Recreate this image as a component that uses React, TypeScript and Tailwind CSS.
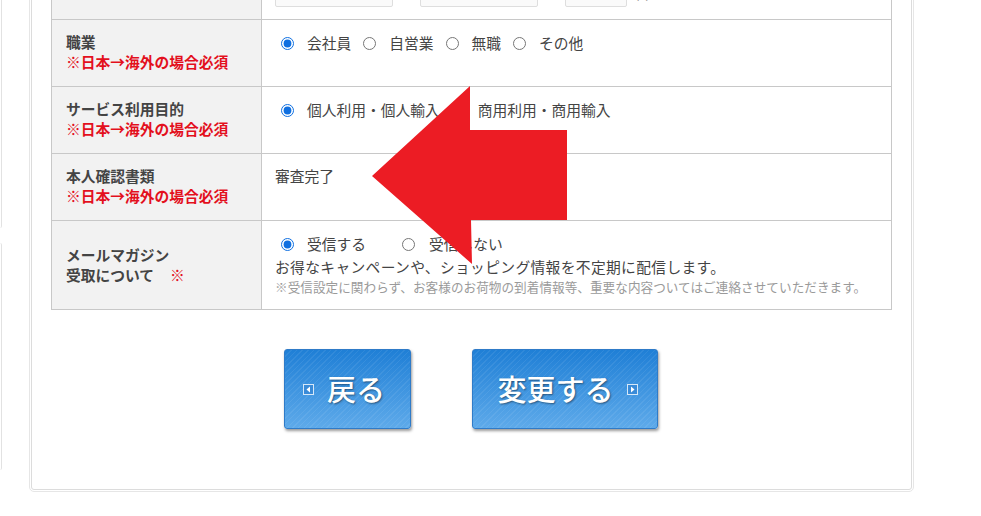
const Radio = ({ checked = false }: { checked?: boolean }) => (
  <input
    type="radio"
    checked={checked}
    readOnly
    className="m-0 w-[13px] h-[13px] shrink-0 accent-[#0f6fe0]"
  />
)

const Label = ({ title, note = true }: { title: string; note?: boolean }) => (
  <div className="w-[210px] shrink-0 border-r border-[#c8c8c8] bg-[#f2f2f2] pl-[14px] pt-[12px] font-bold leading-[20px] text-[#444]">
    <div>{title}</div>
    {note && (
      <div className="text-[#e3101d]">
        <span className="font-normal">※</span>日本→海外の場合必須
      </div>
    )}
  </div>
)

const ArrowBox = ({ dir }: { dir: 'left' | 'right' }) => (
  <span className="flex h-[11px] w-[11px] items-center justify-center border border-[#d6e8f8] bg-[#3a8bd8]">
    <svg width="7" height="7" viewBox="0 0 7 7">
      {dir === 'left' ? <polygon points="5,0.5 5,6.5 1.5,3.5" fill="#fff" /> : <polygon points="2,0.5 2,6.5 5.5,3.5" fill="#fff" />}
    </svg>
  </span>
)

const btn =
  'flex h-[80px] items-center justify-center gap-[13px] rounded-[3px] border border-[#2f7bc8] bg-[image:repeating-linear-gradient(135deg,rgba(255,255,255,0.07)_0px,rgba(255,255,255,0.07)_1px,transparent_1px,transparent_4px),linear-gradient(to_bottom,#1f7fd6,#5eaaea)] text-[29px] font-medium text-white shadow-[1px_2px_3px_rgba(0,0,0,0.4)] [text-shadow:1px_1px_2px_rgba(0,0,0,0.45)]'

export default function App() {
  return (
    <div className="relative flex h-[516px] w-[981px] overflow-hidden bg-white font-['Noto_Sans_CJK_JP',sans-serif] text-[14.75px] text-[#444]">
      {/* sidebar edge on the left */}
      <div className="flex w-[2px] shrink-0 flex-col gap-[15px]">
        <div className="h-[228px] rounded-br-[3px] border-r border-[#e2e2e2]" />
        <div className="h-[227px] rounded-tr-[3px] rounded-br-[3px] border-r border-[#e2e2e2]" />
      </div>

      <div className="ml-[29px] -mt-[41px] h-[531px] w-[881px] shrink-0 rounded-[3px] border border-[#dcdcdc] px-[19px] pb-[59px] outline outline-1 outline-offset-1 outline-[#e6e6e6]">
        <div className="border-x border-t border-[#c8c8c8]">
          {/* partially visible row */}
          <div className="flex h-[59px] border-b border-[#c8c8c8]">
            <div className="w-[210px] shrink-0 border-r border-[#c8c8c8] bg-[#f2f2f2]" />
            <div className="flex items-end gap-[27px] pb-[12px] pl-[13px]">
              <div className="h-[30px] w-[118px] rounded-[2px] border border-[#dedede] bg-[#fafafa]" />
              <div className="h-[30px] w-[118px] rounded-[2px] border border-[#dedede] bg-[#fafafa]" />
              <div className="flex items-end gap-[8px]">
                <div className="h-[30px] w-[62px] rounded-[2px] border border-[#dedede] bg-[#fafafa]" />
                <span className="mb-[3px] text-[#888]">日</span>
              </div>
            </div>
          </div>

          <div className="flex h-[67px] border-b border-[#c8c8c8]">
            <Label title="職業" />
            <div className="flex h-[20px] items-center pl-[19px] pt-[13px] leading-[20px] box-content">
              <Radio checked />
              <span className="ml-[13px] mr-[12px]">会社員</span>
              <Radio />
              <span className="ml-[13px] mr-[12px]">自営業</span>
              <Radio />
              <span className="ml-[13px] mr-[12px]">無職</span>
              <Radio />
              <span className="ml-[13px]">その他</span>
            </div>
          </div>

          <div className="flex h-[67px] border-b border-[#c8c8c8]">
            <Label title="サービス利用目的" />
            <div className="flex h-[20px] items-center pl-[19px] pt-[13px] leading-[20px] box-content">
              <Radio checked />
              <span className="ml-[13px] mr-[12px]">個人利用・個人輸入</span>
              <Radio />
              <span className="ml-[13px]">商用利用・商用輸入</span>
            </div>
          </div>

          <div className="flex h-[67px] border-b border-[#c8c8c8]">
            <Label title="本人確認書類" />
            <div className="pl-[13px] pt-[12px] leading-[20px]">審査完了</div>
          </div>

          <div className="flex h-[89px] border-b border-[#c8c8c8]">
            <div className="flex w-[210px] shrink-0 flex-col justify-center border-r border-[#c8c8c8] bg-[#f2f2f2] pl-[14px] font-bold leading-[20px] text-[#444]">
              <div>メールマガジン</div>
              <div>
                受取について<span className="ml-[16px] font-normal text-[#e3101d]">※</span>
              </div>
            </div>
            <div className="pl-[13px] pt-[13px]">
              <div className="flex h-[20px] items-center pl-[6px] leading-[20px]">
                <Radio checked />
                <span className="ml-[13px] mr-[36px]">受信する</span>
                <Radio />
                <span className="ml-[14px]">受信しない</span>
              </div>
              <div className="mt-[2px] leading-[22px] tracking-[0.35px]">
                お得なキャンペーンや、ショッピング情報を不定期に配信します。
              </div>
              <div className="text-[12.6px] leading-[18px] tracking-[0.05px] text-[#9a9a9a]">
                ※受信設定に関わらず、お客様のお荷物の到着情報等、重要な内容ついてはご連絡させていただきます。
              </div>
            </div>
          </div>
        </div>

        <div className="mt-[39px] flex justify-center gap-[61px] pr-[2px]">
          <button className={`${btn} w-[127px] pr-[6px]`}>
            <ArrowBox dir="left" />
            <span>戻る</span>
          </button>
          <button className={`${btn} w-[186px] pl-[6px] gap-[11px]`}>
            <span>変更する</span>
            <ArrowBox dir="right" />
          </button>
        </div>
      </div>

      {/* red arrow overlay */}
      <svg className="pointer-events-none absolute left-0 top-0" width="981" height="516" viewBox="0 0 981 516">
        <polygon points="372,176 470,86 470,130 567,130 567,220 471,220 472,264" fill="#ec1c24" />
      </svg>
    </div>
  )
}
